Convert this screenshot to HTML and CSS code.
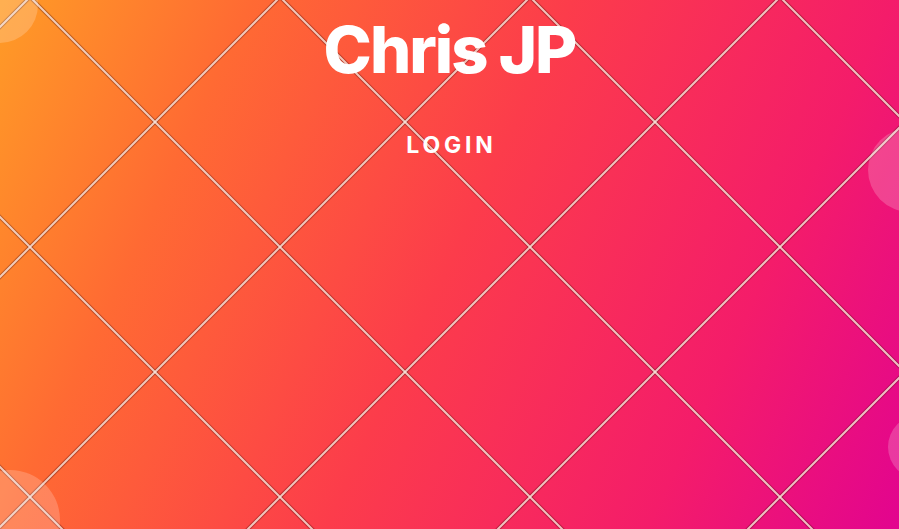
FILE: index.html
```html
<!DOCTYPE html>
<html>
<head>
<meta charset="utf-8">
<link rel="stylesheet" href="styles.css">
</head>
<body>
<div class="page">
  <svg class="grid" width="899" height="529" viewBox="0 0 899 529" xmlns="http://www.w3.org/2000/svg">
    <g class="shade">
      <path d="M-477 -10L73 540M-227 -10L323 540M23 -10L573 540M273 -10L823 540M523 -10L1073 540M773 -10L1323 540"/>
      <path d="M37 -10L-513 540M287 -10L-263 540M537 -10L-13 540M787 -10L237 540M1037 -10L487 540M1287 -10L737 540"/>
    </g>
    <g class="light">
      <path d="M-477 -10L73 540M-227 -10L323 540M23 -10L573 540M273 -10L823 540M523 -10L1073 540M773 -10L1323 540"/>
      <path d="M37 -10L-513 540M287 -10L-263 540M537 -10L-13 540M787 -10L237 540M1037 -10L487 540M1287 -10L737 540"/>
    </g>
  </svg>
  <span class="bubble b1"></span>
  <span class="bubble b2"></span>
  <span class="bubble b3"></span>
  <span class="bubble b4"></span>
  <main class="content">
    <h1 class="title">Chris JP</h1>
    <a class="login" href="#">LOGIN</a>
  </main>
</div>
</body>
</html>
```

FILE: styles.css
```css
html, body {
  margin: 0;
  padding: 0;
  width: 899px;
  height: 529px;
  overflow: hidden;
}

.page {
  position: relative;
  width: 899px;
  height: 529px;
  overflow: hidden;
  background: linear-gradient(115deg, #ff9c26 0%, #ff6a33 22%, #fc3c4b 50%, #f41c6a 78%, #e2048f 100%);
  font-family: "Inter", "Liberation Sans", sans-serif;
}

.grid {
  position: absolute;
  left: 0;
  top: 0;
}

.shade path {
  fill: none;
  stroke: rgba(80, 15, 10, 0.38);
  stroke-width: 4;
}

.light path {
  fill: none;
  stroke: rgba(255, 232, 222, 0.8);
  stroke-width: 2;
}

.bubble {
  position: absolute;
  border-radius: 50%;
  background: rgba(255, 255, 255, 0.2);
}

.b1 { left: -38px; top: -33px; width: 76px; height: 76px; }
.b2 { left: -40px; top: 470px; width: 100px; height: 100px; }
.b3 { left: 868px; top: 128px; width: 84px; height: 84px; }
.b4 { left: 888px; top: 415px; width: 64px; height: 64px; }

.content {
  position: relative;
  display: flex;
  flex-direction: column;
  align-items: center;
  padding-top: 12px;
}

.title {
  margin: 0;
  color: #fff;
  font-weight: 800;
  font-size: 65px;
  line-height: 76px;
  letter-spacing: -2px;
}

.login {
  margin-top: 43px;
  padding-left: 3.8px;
  color: #fff;
  text-decoration: none;
  font-weight: 700;
  font-size: 23px;
  letter-spacing: 3.8px;
  line-height: 28px;
}
```
